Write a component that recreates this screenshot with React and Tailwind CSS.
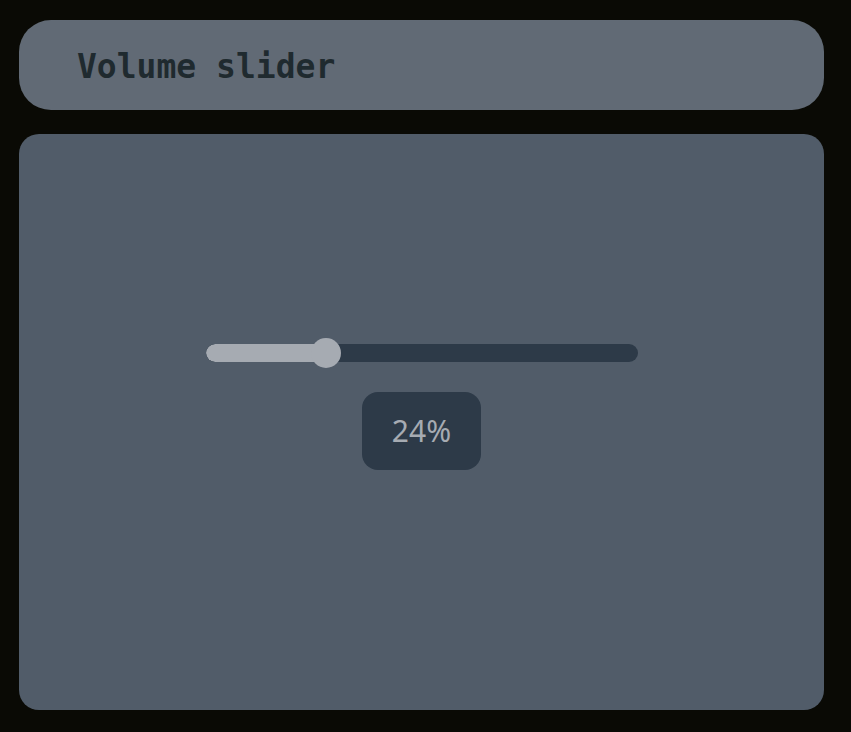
import { useState } from 'react'

const TRACK_W = 432
const THUMB = 30

export default function App() {
  const [volume] = useState(24)
  // fill ends at the thumb centre
  const fill = 120

  return (
    <div className="w-[851px] h-[732px] bg-[#0a0a05] pt-[20px] pl-[19px]" style={{ fontFamily: '"Noto Sans", sans-serif' }}>
      {/* Header */}
      <header className="w-[805px] h-[90px] rounded-[32px] bg-[#616a75] flex items-center pl-[58px]">
        <h1 className="text-[33px] font-bold text-[#1f2a2f] leading-none pt-[2px]" style={{ fontFamily: '"DejaVu Sans Mono", monospace' }}>
          Volume slider
        </h1>
      </header>

      {/* Slider card */}
      <main className="mt-[24px] w-[805px] h-[576px] rounded-[20px] bg-[#515c69] flex flex-col items-center pt-[204px]">
        <div className="relative h-[30px] w-[432px] flex items-center" style={{ width: TRACK_W }}>
          <div className="h-[18px] w-full rounded-full bg-[#2d3a48] overflow-hidden">
            <div className="h-full rounded-full bg-[#a6abb2]" style={{ width: fill }} />
          </div>
          <div
            className="absolute top-0 w-[30px] h-[30px] rounded-full bg-[#a6abb2]"
            style={{ left: fill - THUMB / 2 }}
          />
        </div>

        <div className="mt-[24px] w-[119px] h-[78px] rounded-2xl bg-[#2d3a48] flex items-center justify-center">
          <span className="text-[30px] text-[#a6abb2] leading-none">{volume}%</span>
        </div>
      </main>
    </div>
  )
}
